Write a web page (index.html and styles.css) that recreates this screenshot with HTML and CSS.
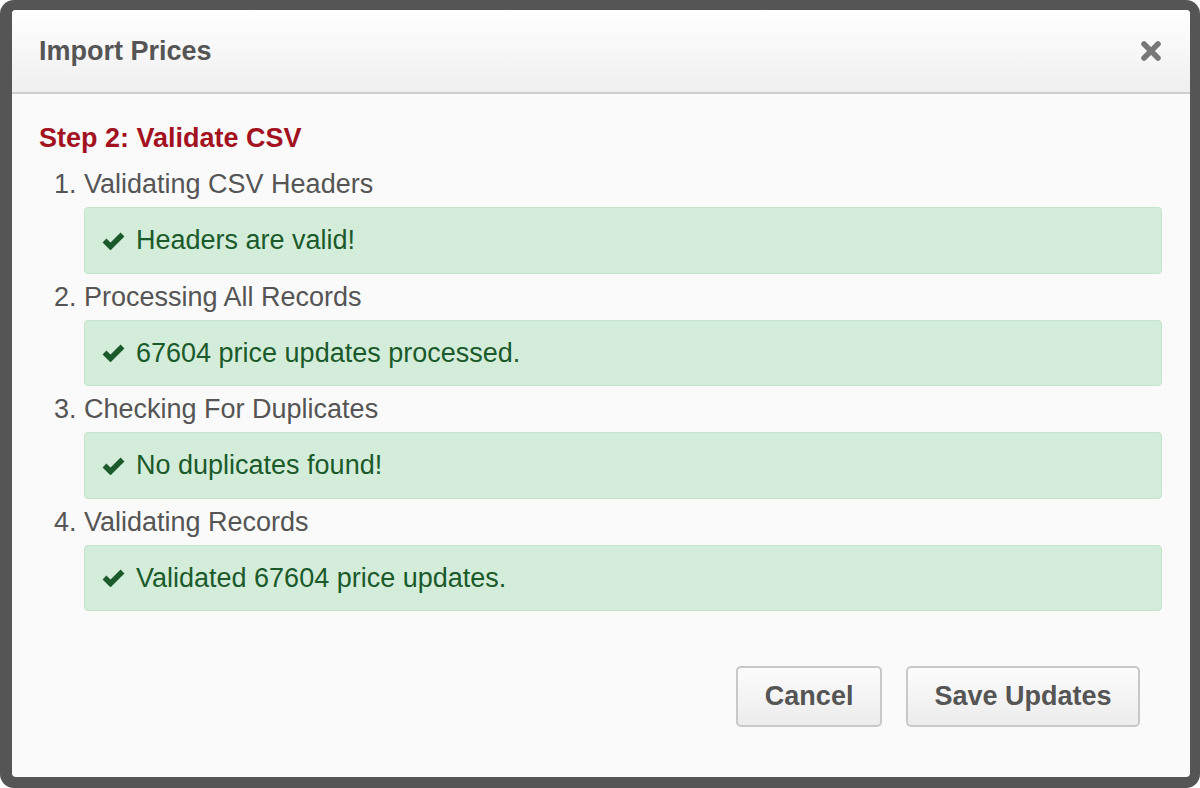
FILE: index.html
```html
<html>

<head>
  <title>Import Prices</title>
  <link rel="stylesheet" href="styles.css">
</head>

<body>
  <div class="frame">
    <div class="modal">

      <div class="modal-header">
        <h4 class="modal-title">Import Prices</h4>
        <button class="close" aria-label="Close">
          <svg width="22" height="22" viewBox="0 0 22 22">
            <path d="M4 4 L18 18 M18 4 L4 18" />
          </svg>
        </button>
      </div>

      <div class="modal-body">
        <h4 class="step">Step 2: Validate CSV</h4>
        <ol class="checks">
          <li>
            <div class="label">Validating CSV Headers</div>
            <div class="alert">
              <svg class="tick" width="23" height="19" viewBox="0 0 23 19"><path d="M2.5 9.5 L8.5 15.5 L20.5 3.5" /></svg>
              Headers are valid!
            </div>
          </li>
          <li>
            <div class="label">Processing All Records</div>
            <div class="alert">
              <svg class="tick" width="23" height="19" viewBox="0 0 23 19"><path d="M2.5 9.5 L8.5 15.5 L20.5 3.5" /></svg>
              67604 price updates processed.
            </div>
          </li>
          <li>
            <div class="label">Checking For Duplicates</div>
            <div class="alert">
              <svg class="tick" width="23" height="19" viewBox="0 0 23 19"><path d="M2.5 9.5 L8.5 15.5 L20.5 3.5" /></svg>
              No duplicates found!
            </div>
          </li>
          <li>
            <div class="label">Validating Records</div>
            <div class="alert">
              <svg class="tick" width="23" height="19" viewBox="0 0 23 19"><path d="M2.5 9.5 L8.5 15.5 L20.5 3.5" /></svg>
              Validated 67604 price updates.
            </div>
          </li>
        </ol>
      </div>

      <div class="modal-footer">
        <button class="btn">Cancel</button>
        <button class="btn">Save Updates</button>
      </div>

    </div>
  </div>
</body>

</html>
```

FILE: styles.css
```css
body {
  margin: 0;
  background: white;
  font-family: "Liberation Sans", Arial, sans-serif;
  font-size: 27px;
  color: #555;
}

.frame {
  height: 788px;
  box-sizing: border-box;
  padding: 10px 10px 11px 12px;
  background: #555;
  border-radius: 14px;
}

.modal {
  height: 100%;
  display: flex;
  flex-direction: column;
  background: #fafafa;
  border-radius: 4px;
  overflow: hidden;
}

.modal-header {
  height: 82px;
  display: flex;
  align-items: center;
  justify-content: space-between;
  padding: 0 28px 0 27px;
  background: linear-gradient(#ffffff, #efefef);
  border-bottom: 2px solid #cdcdcd;
}

.modal-title {
  margin: 0;
  font-size: 27px;
  font-weight: bold;
  color: #555;
}

.close {
  border: 0;
  padding: 0;
  background: none;
  display: flex;
}

.close path {
  stroke: #777;
  stroke-width: 5.5;
  stroke-linecap: round;
  fill: none;
}

.modal-body {
  padding: 21px 28px 0 27px;
}

.step {
  margin: 0;
  font-size: 27px;
  line-height: 46px;
  font-weight: bold;
  color: #a3131f;
}

.checks {
  margin: 0;
  padding-left: 45px;
}

.label {
  line-height: 46px;
}

.alert {
  display: flex;
  align-items: center;
  gap: 11px;
  padding: 14px 18px 14px 17px;
  line-height: 36.5px;
  background: #d4edda;
  border: 1px solid #c3e6cb;
  border-radius: 4px;
  color: #1b5a2b;
}

.tick path {
  stroke: #1b5a2b;
  stroke-width: 5.5;
  fill: none;
}

.modal-footer {
  display: flex;
  justify-content: flex-end;
  gap: 24px;
  padding: 55px 50px 0 0;
}

.btn {
  height: 61px;
  padding: 0 26.5px;
  font-family: "Liberation Sans", Arial, sans-serif;
  font-size: 27px;
  font-weight: bold;
  color: #555;
  background: linear-gradient(#fcfcfc, #ececec);
  border: 2px solid #c8c8c8;
  border-radius: 5px;
}
```
